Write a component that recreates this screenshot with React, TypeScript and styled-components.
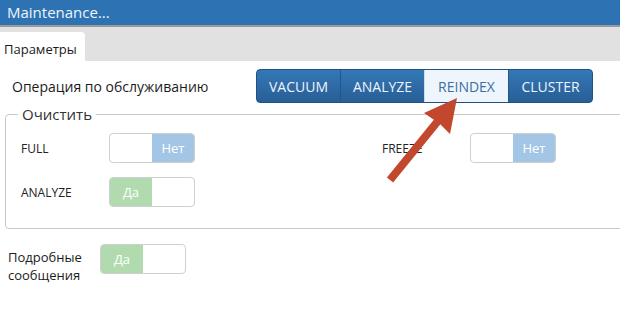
import { createGlobalStyle, styled } from "styled-components";

const GlobalStyle = createGlobalStyle`
  html, body {
    margin: 0;
    padding: 0;
    background: #fff;
  }
  body {
    font-family: "Open Sans", "Noto Sans", sans-serif;
    color: #1b1b1b;
  }
`;

const operations = ["VACUUM", "ANALYZE", "REINDEX", "CLUSTER"];

interface SwitchProps {
  on: boolean;
}

const Toggle = ({ on }: SwitchProps) => (
  <SwitchBox>
    {on ? <SwitchYes>Да</SwitchYes> : <SwitchEmpty />}
    {on ? <SwitchEmpty /> : <SwitchNo>Нет</SwitchNo>}
  </SwitchBox>
);

const Arrow = () => (
  <ArrowLayer width="620" height="321" viewBox="0 0 620 321">
    <line x1="390" y1="180" x2="442" y2="116" stroke="#c1482d" strokeWidth="8" />
    <polygon points="457,98 450,134 440,124 424,113" fill="#c1482d" />
  </ArrowLayer>
);

const App = () => {
  return (
    <Window>
      <GlobalStyle />
      <TitleBar>Maintenance...</TitleBar>
      <TabStrip>
        <Tab>Параметры</Tab>
      </TabStrip>
      <Body>
        <OpRow>
          <OpLabel>Операция по обслуживанию</OpLabel>
          <Segmented>
            {operations.map(op => (
              <Segment key={op} $active={op === "REINDEX"}>
                {op}
              </Segment>
            ))}
          </Segmented>
        </OpRow>
        <Group>
          <Legend>Очистить</Legend>
          <OptionGrid>
            <OptionLabel>FULL</OptionLabel>
            <Toggle on={false} />
            <OptionLabel>FREEZE</OptionLabel>
            <Toggle on={false} />
            <OptionLabel>ANALYZE</OptionLabel>
            <Toggle on={true} />
          </OptionGrid>
        </Group>
        <VerboseRow>
          <VerboseLabel>
            Подробные
            <br />
            сообщения
          </VerboseLabel>
          <Toggle on={true} />
        </VerboseRow>
      </Body>
      <Arrow />
    </Window>
  );
};

export default App;

const Window = styled.div`
  position: relative;
  width: 620px;
  height: 321px;
  overflow: hidden;
  background: #fff;
`;

const TitleBar = styled.div`
  height: 25px;
  padding-left: 7px;
  background: #2d73b4;
  border-bottom: 2px solid #9a9a9a;
  color: #eef4fa;
  font-size: 15px;
  line-height: 24px;
`;

const TabStrip = styled.div`
  display: flex;
  align-items: flex-end;
  height: 34px;
  background: #e1e1e1;
`;

const Tab = styled.div`
  height: 29px;
  padding: 0 8px 0 4px;
  background: #fff;
  border-top-right-radius: 4px;
  font-size: 13px;
  line-height: 34px;
`;

const Body = styled.div`
  padding: 8px 0 0;
`;

const OpRow = styled.div`
  display: flex;
  align-items: center;
  padding-left: 12px;
`;

const OpLabel = styled.div`
  width: 244px;
  font-size: 14px;
`;

const Segmented = styled.div`
  display: flex;
  height: 32px;
  border: 1px solid #1f5282;
  border-radius: 4px;
  overflow: hidden;
  background: linear-gradient(#3478b8, #285e95);
`;

const Segment = styled.div<{ $active: boolean }>`
  width: 83px;
  display: flex;
  align-items: center;
  justify-content: center;
  font-size: 14px;
  color: ${p => (p.$active ? "#3a6f9f" : "#eef4fa")};
  background: ${p => (p.$active ? "#eef5fc" : "transparent")};
  border-left: 1px solid ${p => (p.$active ? "#c9ddef" : "#24568a")};

  &:first-child {
    border-left: none;
  }
`;

const Group = styled.fieldset`
  margin: 4px -20px 0 5px;
  padding: 12px 0 12px 15px;
  height: 96px;
  border: 1px solid #c8c8c8;
  border-radius: 4px;
`;

const Legend = styled.legend`
  padding: 0 4px;
  margin-left: -3px;
  font-size: 15px;
  line-height: 14px;
  color: #333;
`;

const OptionGrid = styled.div`
  display: grid;
  grid-template-columns: 88px 86px 187px 88px 86px;
  row-gap: 14px;
  align-items: center;

  & > :nth-child(3) {
    grid-column: 4;
  }
`;

const OptionLabel = styled.div`
  font-size: 12px;
  color: #222;
`;

const VerboseRow = styled.div`
  display: flex;
  align-items: center;
  padding: 5px 0 0 8px;
`;

const VerboseLabel = styled.div`
  width: 92px;
  font-size: 13px;
  line-height: 18px;
  padding-top: 14px;
`;

const SwitchBox = styled.div`
  display: flex;
  width: 84px;
  height: 28px;
  border: 1px solid #cfcfcf;
  border-radius: 4px;
  overflow: hidden;
  background: #fff;
`;

const SwitchEmpty = styled.div`
  flex: 1;
`;

const SwitchHalf = styled.div`
  flex: 1;
  display: flex;
  align-items: center;
  justify-content: center;
  color: #fff;
  font-size: 13px;
`;

const SwitchYes = styled(SwitchHalf)`
  background: #b1dbae;
`;

const SwitchNo = styled(SwitchHalf)`
  background: #a3c6e7;
`;

const ArrowLayer = styled.svg`
  position: absolute;
  left: 0;
  top: 0;
  pointer-events: none;
`;
